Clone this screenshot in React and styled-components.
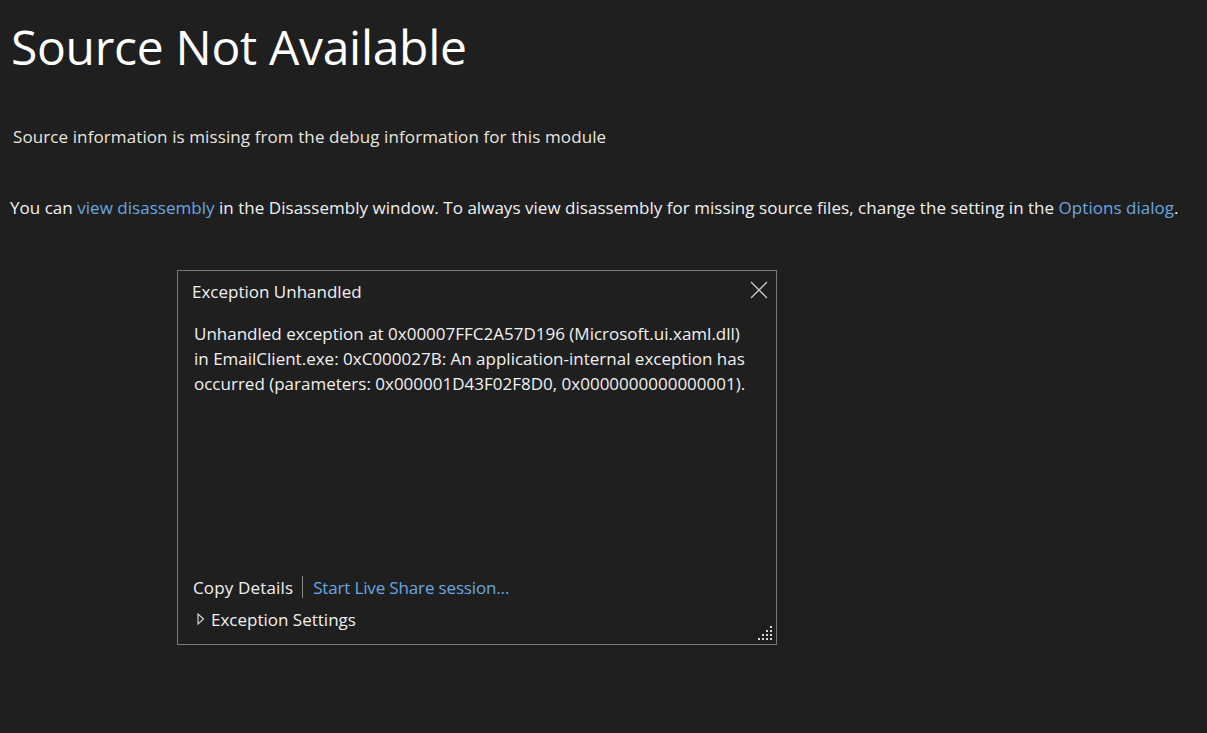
import React from "react";
import styled, { createGlobalStyle } from "styled-components";

const Global = createGlobalStyle`
  html, body { margin: 0; padding: 0; background: #1f1f1f; }
  body { font-family: "Open Sans", "Noto Sans", sans-serif; color: #f1f1f1; }
`;

const Page = styled.div`
  width: 1207px;
  height: 733px;
  box-sizing: border-box;
  padding: 14px 0 0 0;
  display: flex;
  flex-direction: column;
  overflow: hidden;
`;

const Title = styled.h1`
  margin: 0 0 0 11px;
  font-weight: 400;
  font-size: 48px;
  line-height: 66px;
  color: #ffffff;
  letter-spacing: -0.3px;
`;

const Para = styled.p`
  margin: ${(p) => p.$mt}px 0 0 ${(p) => p.$ml}px;
  font-size: 17px;
  line-height: 22px;
  color: ${(p) => p.$color || "#f1f1f1"};
  letter-spacing: ${(p) => p.$ls || "0"};
  white-space: nowrap;
`;

const Link = styled.span`
  color: #69a7e0;
`;

const Dialog = styled.div`
  margin: 51px 0 0 177px;
  width: 600px;
  height: 375px;
  box-sizing: border-box;
  border: 1px solid #7a7a7a;
  background: #1f1f1f;
  position: relative;
  display: flex;
  flex-direction: column;
  padding: 8px 14px 0 14px;
`;

const Header = styled.div`
  display: flex;
  justify-content: space-between;
  align-items: center;
  height: 24px;
`;

const DlgTitle = styled.div`
  font-size: 17px;
  color: #f1f1f1;
`;

const Close = styled.button`
  border: 0;
  background: transparent;
  padding: 0;
  margin-right: -9px;
  margin-top: -3px;
  width: 24px;
  height: 24px;
  display: flex;
  align-items: center;
  justify-content: center;
  cursor: pointer;
`;

const Body = styled.div`
  margin-top: 18px;
  padding-left: 2px;
  font-size: 17px;
  line-height: 25px;
  color: #f1f1f1;
  flex: 1;
`;

const Actions = styled.div`
  display: flex;
  align-items: center;
  font-size: 17px;
  height: 24px;
  padding-left: 1px;
`;

const Action = styled.span`
  color: ${(p) => (p.$link ? "#69a7e0" : "#f1f1f1")};
  letter-spacing: ${(p) => (p.$link ? "-0.15px" : "0.15px")};
`;

const Sep = styled.span`
  width: 1px;
  height: 22px;
  background: #8a8a8a;
  margin: 0 10px 0 9px;
`;

const Expander = styled.div`
  display: flex;
  align-items: center;
  gap: 6px;
  margin: 8px 0 13px 5px;
  font-size: 17px;
  height: 24px;
  color: #f1f1f1;
`;

const Grip = styled.svg`
  position: absolute;
  right: 3px;
  bottom: 3px;
`;

export default function App() {
  return (
    <>
      <Global />
      <Page>
        <Title>Source Not Available</Title>
        <Para $mt={46} $ml={13} $color="#e8e6df" $ls="0.1px">
          Source information is missing from the debug information for this module
        </Para>
        <Para $mt={49} $ml={10} $ls="0.03px">
          You can <Link>view disassembly</Link> in the Disassembly window. To always view disassembly for missing source files, change the setting in the <Link>Options dialog</Link>.
        </Para>
        <Dialog>
          <Header>
            <DlgTitle>Exception Unhandled</DlgTitle>
            <Close aria-label="Close">
              <svg width="18" height="18" viewBox="0 0 18 18">
                <path d="M1 1 L17 17 M17 1 L1 17" stroke="#c8c8c8" strokeWidth="1.3" />
              </svg>
            </Close>
          </Header>
          <Body>
            Unhandled exception at 0x00007FFC2A57D196 (Microsoft.ui.xaml.dll)
            <br />
            in EmailClient.exe: 0xC000027B: An application-internal exception has
            <br />
            occurred (parameters: 0x000001D43F02F8D0, 0x0000000000000001).
          </Body>
          <Actions>
            <Action>Copy Details</Action>
            <Sep />
            <Action $link>Start Live Share session...</Action>
          </Actions>
          <Expander>
            <svg width="8" height="12" viewBox="0 0 8 12">
              <path d="M1 1 L6.5 6 L1 11 Z" fill="none" stroke="#d0d0d0" strokeWidth="1.2" />
            </svg>
            Exception Settings
          </Expander>
          <Grip width="15" height="15" viewBox="0 0 15 15">
            {[
              [12, 0],
              [8, 4], [12, 4],
              [4, 8], [8, 8], [12, 8],
              [0, 12], [4, 12], [8, 12], [12, 12],
            ].map(([x, y], i) => (
              <rect key={i} x={x} y={y} width="2" height="2" fill="#d8d8d8" />
            ))}
          </Grip>
        </Dialog>
      </Page>
    </>
  );
}
